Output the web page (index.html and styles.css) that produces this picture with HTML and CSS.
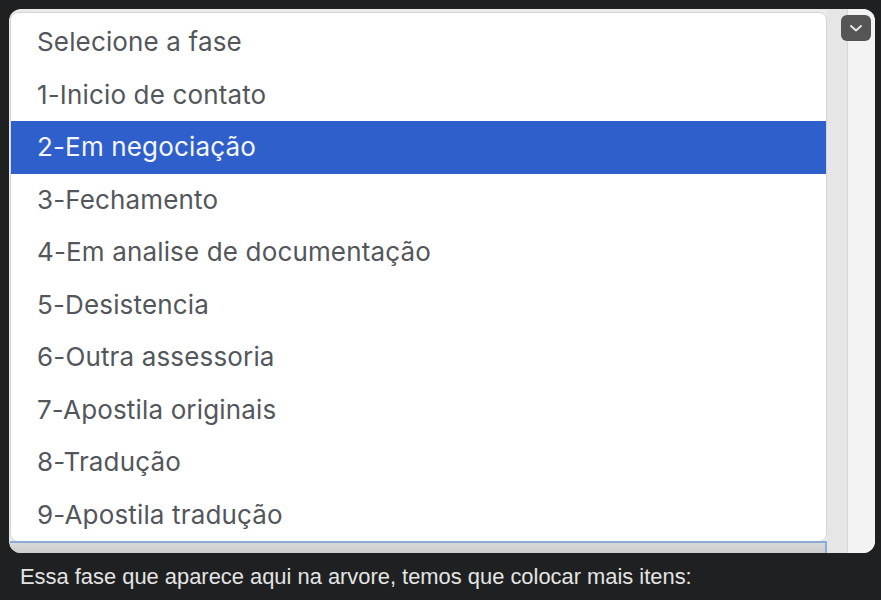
FILE: index.html
```html
<!DOCTYPE html>
<html lang="pt">
<head>
<meta charset="utf-8">
<link rel="stylesheet" href="styles.css">
</head>
<body>
<div class="page">
  <div class="topstrip"></div>
  <div class="shot">
    <div class="main">
      <ul class="list">
        <li class="opt">Selecione a fase</li>
        <li class="opt">1-Inicio de contato</li>
        <li class="opt selected">2-Em negociação</li>
        <li class="opt">3-Fechamento</li>
        <li class="opt">4-Em analise de documentação</li>
        <li class="opt">5-Desistencia</li>
        <li class="opt">6-Outra assessoria</li>
        <li class="opt">7-Apostila originais</li>
        <li class="opt">8-Tradução</li>
        <li class="opt">9-Apostila tradução</li>
      </ul>
      <div class="select"></div>
    </div>
    <div class="side">
      <div class="gutter"></div>
      <div class="rail">
        <div class="chev">
          <svg width="14" height="9" viewBox="0 0 14 9"><path d="M2 2 L7 6.5 L12 2" fill="none" stroke="#e6e6e6" stroke-width="2" stroke-linecap="round" stroke-linejoin="round"/></svg>
        </div>
      </div>
    </div>
  </div>
  <p class="caption">Essa fase que aparece aqui na arvore, temos que colocar mais itens:</p>
</div>
</body>
</html>
```
FILE: styles.css
```css
html, body {
  margin: 0;
  padding: 0;
  background: #1f2021;
}
.page {
  width: 881px;
  height: 600px;
  overflow: hidden;
}
.topstrip {
  height: 9px;
}
.shot {
  margin: 0 6px 0 9px;
  height: 544px;
  border-radius: 12px;
  background: #ebebeb;
  overflow: hidden;
  display: flex;
}
.main {
  width: 817px;
  padding-left: 1px;
  display: flex;
  flex-direction: column;
}
.list {
  list-style: none;
  margin: 3px 0 0 0;
  padding: 3px 0 0 0;
  height: 525px;
  background: #fff;
  border: 1px solid #d4d4d4;
  border-radius: 8px;
  box-sizing: content-box;
  font-family: "Inter", "Lato", sans-serif;
  font-size: 26px;
  letter-spacing: 0.15px;
  color: #53575c;
}
.opt {
  height: 52.5px;
  line-height: 52px;
  padding-left: 26px;
  white-space: nowrap;
}
.opt.selected {
  background: #2f5fcb;
  color: #f4f6fb;
}
.select {
  flex: 1;
  margin-top: -1px;
  border-top: 2px solid #8aaad8;
  border-right: 2px solid #8aaad8;
  background: linear-gradient(#d9d9d9, #cdcdcd);
}
.side {
  flex: 1;
  display: flex;
}
.gutter {
  width: 20px;
  background: #e6e6e6;
  border-right: 1px solid #d6d6d6;
}
.rail {
  flex: 1;
  background: #f3f3f3;
  position: relative;
}
.chev {
  position: absolute;
  left: -7px;
  top: 6px;
  width: 30px;
  height: 26px;
  border-radius: 6px;
  background: #555;
  display: flex;
  align-items: center;
  justify-content: center;
}
.caption {
  margin: 12px 0 0 20px;
  font-family: "Liberation Sans", Arial, sans-serif;
  font-size: 21.9px;
  line-height: 24px;
  color: #e4e4e4;
}
```
